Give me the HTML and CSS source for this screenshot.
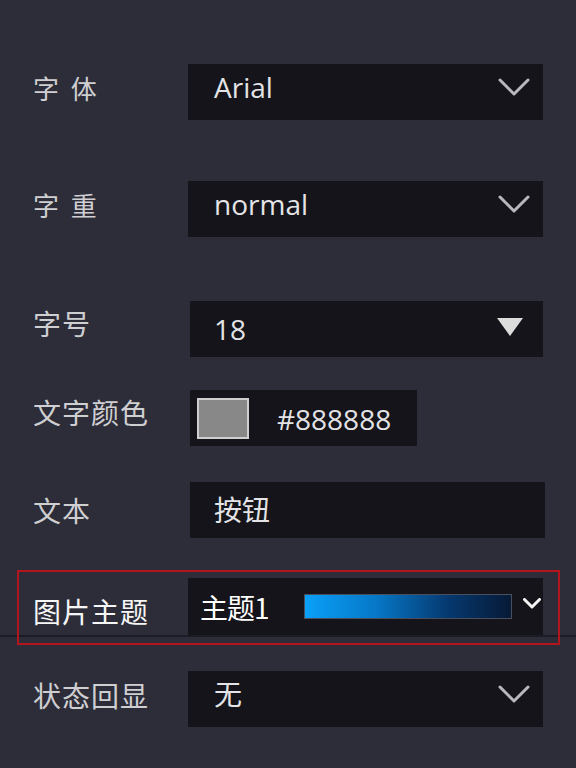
FILE: index.html
```html
<!DOCTYPE html>
<html lang="zh">
<head>
<meta charset="utf-8">
<title>属性面板</title>
<link rel="stylesheet" href="styles.css">
</head>
<body>
<div class="panel">
  <div class="row row--first">
    <span class="label label--wide label--up">字 体</span>
    <div class="field select">
      <span class="value">Arial</span>
      <svg class="chev" viewBox="0 0 32 19"><path d="M2 2 L16 16 L30 2"/></svg>
    </div>
  </div>
  <div class="row row--gap61">
    <span class="label label--wide label--up">字 重</span>
    <div class="field select">
      <span class="value">normal</span>
      <svg class="chev" viewBox="0 0 32 19"><path d="M2 2 L16 16 L30 2"/></svg>
    </div>
  </div>
  <div class="row row--gap64">
    <span class="label label--up2">字号</span>
    <div class="field field--inset">
      <span class="value">18</span>
      <svg class="tri" viewBox="0 0 26 18"><path d="M0 0 H26 L13 18 Z"/></svg>
    </div>
  </div>
  <div class="row row--gap33">
    <span class="label label--up2">文字颜色</span>
    <div class="field field--inset field--color">
      <span class="swatch"></span>
      <span class="value">#888888</span>
    </div>
  </div>
  <div class="row row--gap36">
    <span class="label">文本</span>
    <div class="field field--inset field--text">
      <span class="value">按钮</span>
    </div>
  </div>
  <div class="row row--gap40 row--theme">
    <span class="label label--strong label--down">图片主题</span>
    <div class="field field--theme">
      <span class="value value--strong">主题1</span>
      <span class="gradient"></span>
      <svg class="chev chev--small" viewBox="0 0 18 11"><path d="M1.5 1.5 L9 9 L16.5 1.5"/></svg>
    </div>
  </div>
  <div class="row row--gap34">
    <span class="label label--up">状态回显</span>
    <div class="field select">
      <span class="value">无</span>
      <svg class="chev" viewBox="0 0 32 19"><path d="M2 2 L16 16 L30 2"/></svg>
    </div>
  </div>
</div>
</body>
</html>
```

FILE: styles.css
```css
html, body {
  margin: 0;
  padding: 0;
}

body {
  background: #2d2d39;
  width: 576px;
  height: 768px;
  overflow: hidden;
  font-family: "Noto Sans CJK SC", "Noto Sans", sans-serif;
}

.panel {
  display: flex;
  flex-direction: column;
  padding-top: 64px;
}

.row {
  display: flex;
  align-items: center;
  padding-left: 33px;
}

.row--gap61 { margin-top: 61px; }
.row--gap64 { margin-top: 64px; }
.row--gap33 { margin-top: 33px; }
.row--gap36 { margin-top: 36px; }
.row--gap40 { margin-top: 40px; }
.row--gap34 { margin-top: 34px; }

.label {
  width: 155px;
  flex: none;
  font-size: 28px;
  line-height: 36px;
  letter-spacing: 1px;
  color: #cfcfd2;
  white-space: pre;
}

.label--wide {
  font-size: 26px;
  letter-spacing: 3px;
}

.label--up { margin-bottom: 8px; }
.label--up2 { margin-bottom: 12px; }
.label--down { margin-top: 8px; }

.label--strong {
  color: #f6f6f6;
}

.field {
  box-sizing: border-box;
  width: 355px;
  height: 56px;
  background: #14141a;
  display: flex;
  align-items: center;
  padding-left: 26px;
  padding-right: 13px;
  flex: none;
}

.select {
  padding-bottom: 10px;
  padding-top: 0;
}

.field--inset {
  width: 353px;
  margin-left: 2px;
  padding-left: 24px;
  padding-right: 20px;
}

.field--text {
  width: 355px;
}

.field--color {
  width: 227px;
  padding-left: 7px;
}

.value {
  font-family: "Open Sans", "Noto Sans CJK SC", sans-serif;
  font-size: 28px;
  line-height: 36px;
  color: #e4e4e6;
  flex: 1;
  white-space: nowrap;
}

.value--strong {
  flex: none;
  color: #ffffff;
  font-family: "Noto Sans CJK SC", sans-serif;
  letter-spacing: -1px;
  width: 104px;
}

.chev {
  width: 32px;
  height: 19px;
  flex: none;
}

.chev path {
  fill: none;
  stroke: #b9b9bd;
  stroke-width: 3;
  stroke-linecap: round;
  stroke-linejoin: round;
}

.chev--small {
  width: 18px;
  height: 11px;
  margin-left: 11px;
  margin-bottom: 6px;
}

.chev--small path {
  stroke: #f2f2f2;
}

.tri {
  width: 26px;
  height: 18px;
  flex: none;
  margin-bottom: 4px;
}

.tri path {
  fill: #dcdcdc;
}

.swatch {
  box-sizing: border-box;
  width: 52px;
  height: 41px;
  background: #888888;
  border: 2px solid #cfcfcf;
  margin-right: 28px;
  flex: none;
}

.field--color .value {
  flex: none;
  margin-top: 2px;
}

.row--theme {
  position: relative;
  border-bottom: 2px solid #1c1c24;
}

.row--theme::after {
  content: "";
  position: absolute;
  left: 17px;
  top: -8px;
  width: 543px;
  height: 75px;
  border: 2px solid #b3151c;
  box-sizing: border-box;
  pointer-events: none;
}

.field--theme {
  height: 57px;
  padding-left: 12px;
  padding-right: 2px;
}

.gradient {
  box-sizing: border-box;
  width: 208px;
  height: 25px;
  flex: none;
  border: 1px solid #4a4f5e;
  background: linear-gradient(90deg, #0aa0f8 0%, #0677c6 35%, #06386e 70%, #071a36 100%);
}
```
